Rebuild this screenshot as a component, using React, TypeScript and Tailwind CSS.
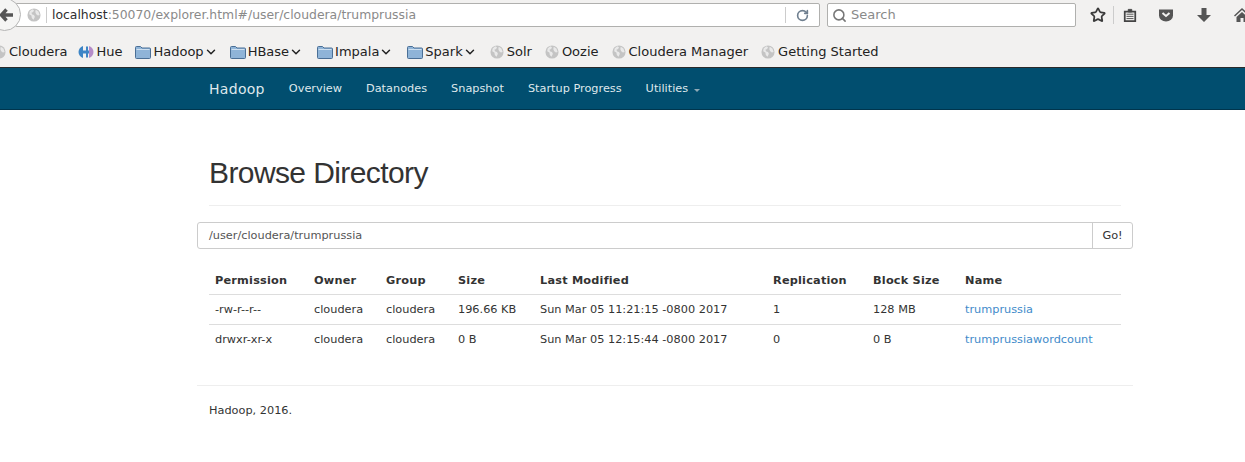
import { ChevronDown, RotateCw, Search, Star } from "lucide-react";

const dejavu = "font-['DejaVu_Sans',sans-serif]";

function Globe({ className = "" }: { className?: string }) {
  return (
    <svg viewBox="0 0 16 16" className={`w-[14px] h-[14px] shrink-0 ${className}`}>
      <circle cx="8" cy="8" r="7.5" fill="#c4c4c4" />
      <path d="M3 4l3-2.5 2 1-1 2-2 1 1 2 2 .5 1 2-1.500 3.500-2-2-.5-3-2.500-1.500z" fill="#e9e9e9" />
      <path d="M10 2l3 2 1.500 4-2 .5-2-1.500-1-2.500z" fill="#e9e9e9" />
    </svg>
  );
}

function Folder() {
  return (
    <svg viewBox="0 0 16 14" className="w-[16px] h-[14px] shrink-0">
      <path d="M.5 2.500a1 1 0 011-1h4l1.500 1.500h7.500a1 1 0 011 1v8.500a1 1 0 01-1 1h-13a1 1 0 01-1-1z" fill="#8fb4d8" stroke="#4a6f96" />
      <path d="M1.500 4.500h13" stroke="#cfe0f0" />
    </svg>
  );
}

function HueIcon() {
  return (
    <svg viewBox="0 0 16 14" className="w-[16px] h-[14px] shrink-0">
      <path d="M5 1C2 2 .5 4.500.5 7S2 12 5 13z" fill="#3d85c6" />
      <rect x="5" y="5.500" width="6" height="3" fill="#3d85c6" />
      <path d="M8 1.500h2v11H8z" fill="#3d85c6" />
      <path d="M11 1c3 1 4.500 3.500 4.500 6S14 12 11 13z" fill="#b48cc8" />
    </svg>
  );
}

function Bookmark({
  icon,
  label,
  menu,
  className = "",
}: {
  icon: "globe" | "folder" | "hue";
  label: string;
  menu?: boolean;
  className?: string;
}) {
  return (
    <div className={`flex items-center shrink-0 ${icon === "globe" ? "gap-[3px]" : "gap-[2px]"} ${className}`}>
      {icon === "globe" && <Globe />}
      {icon === "folder" && <Folder />}
      {icon === "hue" && <HueIcon />}
      <span>{label}</span>
      {menu && <ChevronDown className="w-[14px] h-[14px] -ml-[2px] text-[#222]" strokeWidth={2.5} />}
    </div>
  );
}

function BrowserChrome() {
  return (
    <div className={`relative h-[68px] bg-[#f2f1f0] ${dejavu} border-b border-[#2a2a2a] overflow-hidden`}>
      {/* Back button */}
      <div className="absolute -left-[12px] -top-[2px] z-10 w-[33px] h-[33px] rounded-full border border-[#b5b5b5] bg-[#f5f5f4] flex items-center justify-end pr-[7px]">
        <svg viewBox="0 0 14 14" className="w-[14px] h-[14px]">
          <path d="M7.500 1.500L2.500 7l5 5.500M3 7H14" fill="none" stroke="#555" strokeWidth="3.400" />
        </svg>
      </div>

      <div className="flex h-[30px] pt-[3px] items-start">
        {/* URL bar */}
        <div className="ml-[15px] w-[805px] h-[24px] shrink-0 bg-white border border-[#b0b0ae] rounded-[2px] flex items-center text-[12.4px]">
          <Globe className="ml-[11px]" />
          <div className="ml-[5px] w-px h-[16px] bg-[#ccc]" />
          <span className="ml-[5px] text-[#2e2e2e]">localhost</span>
          <span className="text-[#8a8a8a]">:50070/explorer.html#/user/cloudera/trumprussia</span>
          <div className="ml-auto w-px h-[16px] bg-[#ccc]" />
          <RotateCw className="mx-[10px] w-[13px] h-[13px] text-[#6f7f8f]" strokeWidth={3} />
        </div>
        {/* Search */}
        <div className="ml-[7px] w-[249px] h-[24px] shrink-0 bg-white border border-[#b0b0ae] rounded-[2px] flex items-center text-[13px] text-[#8a8a8a]">
          <Search className="ml-[4px] w-[15px] h-[15px] text-[#777]" strokeWidth={2.500} />
          <span className="ml-[4px]">Search</span>
        </div>
        {/* Toolbar icons */}
        <div className="ml-[14px] flex items-center h-[24px] shrink-0 text-[#4a4a4a]">
          <Star className="w-[16px] h-[16px] text-[#3a3a3a]" strokeWidth={2.6} />
          <div className="ml-[7px] w-px h-[18px] bg-[#ccc]" />
          <svg viewBox="0 0 16 16" className="ml-[9px] w-[14px] h-[15px]">
            <path d="M2 3.500h12v11H2z" fill="none" stroke="#444" strokeWidth="2" />
            <path d="M6 1h4v3H6zM4 6.500h8M4 9h8M4 11.500h8" fill="#444" stroke="#444" />
          </svg>
          <svg viewBox="0 0 16 16" className="ml-[21px] w-[16px] h-[16px]">
            <path d="M1 2.500h14v6a7 6 0 01-14 0z" fill="#555" />
            <path d="M4.500 6L8 9l3.500-3" fill="none" stroke="#f2f1f0" strokeWidth="2" />
          </svg>
          <svg viewBox="0 0 14 14" className="ml-[23px] w-[14px] h-[14px]">
            <path d="M4.500 0h5v7H14l-7 7-7-7h4.500z" fill="#555" />
          </svg>
          <svg viewBox="0 0 16 16" className="ml-[23px] w-[16px] h-[16px] shrink-0">
            <path d="M8 1L0 8.500l1 1L8 3l7 6.500 1-1zM2.500 10v5h4v-4h3v4h4v-5L8 5z" fill="#555" />
          </svg>
        </div>
      </div>

      {/* Bookmarks */}
      <div className="flex items-center h-[22px] mt-[11px] -ml-[8px] text-[13px] text-[#222] gap-[12px]">
        <Bookmark icon="globe" label="Cloudera" />
        <Bookmark icon="hue" label="Hue" className="-ml-[1px]" />
        <Bookmark icon="folder" label="Hadoop" menu className="ml-[1px]" />
        <Bookmark icon="folder" label="HBase" menu />
        <Bookmark icon="folder" label="Impala" menu className="ml-[2px]" />
        <Bookmark icon="folder" label="Spark" menu className="ml-[2px]" />
        <Bookmark icon="globe" label="Solr" className="ml-[1px]" />
        <Bookmark icon="globe" label="Oozie" className="ml-[1px]" />
        <Bookmark icon="globe" label="Cloudera Manager" className="ml-[1px]" />
        <Bookmark icon="globe" label="Getting Started" className="ml-[1px]" />
      </div>
    </div>
  );
}

function Navbar() {
  const links = ["Overview", "Datanodes", "Snapshot", "Startup Progress"];
  return (
    <div className={`h-[42px] bg-[#014e6f] border-b border-[#00354d] flex items-center pl-[209px] pt-[2px] ${dejavu} text-[#dfe8ec]`}>
      <span className="text-[14px] tracking-[0.3px] mr-[24px]">Hadoop</span>
      <div className="flex items-center gap-[24px] text-[11.3px]">
        {links.map((l) => (
          <span key={l}>{l}</span>
        ))}
        <span className="flex items-center">
          Utilities
          <span className="ml-[6px] mt-[2px] border-x-[3px] border-t-[3px] border-x-transparent border-t-[#8fa9b6]" />
        </span>
      </div>
    </div>
  );
}

const rows = [
  ["-rw-r--r--", "cloudera", "cloudera", "196.66 KB", "Sun Mar 05 11:21:15 -0800 2017", "1", "128 MB", "trumprussia"],
  ["drwxr-xr-x", "cloudera", "cloudera", "0 B", "Sun Mar 05 12:15:44 -0800 2017", "0", "0 B", "trumprussiawordcount"],
];

const headers = ["Permission", "Owner", "Group", "Size", "Last Modified", "Replication", "Block Size", "Name"];
const widths = ["w-[99px]", "w-[72px]", "w-[72px]", "w-[82px]", "w-[233px]", "w-[100px]", "w-[92px]", "w-[162px]"];

export default function App() {
  return (
    <div className="w-[1245px] h-[462px] bg-white overflow-hidden">
      <BrowserChrome />
      <Navbar />

      <div className={`ml-[197px] w-[936px] ${dejavu} text-[11.3px] text-[#333]`}>
        <div className="mx-[12px] mt-[46px] pb-[16px] border-b border-[#eee]">
          <h1 className="font-['Liberation_Sans',sans-serif] text-[30px] leading-[33px] tracking-[-0.6px] text-[#333]">Browse Directory</h1>
        </div>

        {/* Path input */}
        <div className="mt-[16px] flex h-[27px] border border-[#ccc] rounded-[3px]">
          <div className="flex-1 flex items-center pl-[11px] pt-[1px] text-[#555]">/user/cloudera/trumprussia</div>
          <div className="w-[40px] border-l border-[#ccc] pt-[1px] flex items-center justify-center">Go!</div>
        </div>

        {/* Listing */}
        <table className="mx-[12px] mt-[17px] w-[912px] table-fixed border-collapse">
          <thead>
            <tr className="h-[28px] border-b border-[#ddd]">
              {headers.map((h, i) => (
                <th key={h} className={`${widths[i]} px-[6px] pt-[3px] text-left font-bold tracking-[0.2px]`}>
                  {h}
                </th>
              ))}
            </tr>
          </thead>
          <tbody>
            {rows.map((row) => (
              <tr key={row[7]} className="h-[30px] border-b border-[#ddd] last:border-b-0">
                {row.map((cell, i) => (
                  <td key={i} className={`px-[6px] pt-[3px] whitespace-nowrap ${i === 7 ? "text-[#428bca]" : ""}`}>
                    {cell}
                  </td>
                ))}
              </tr>
            ))}
          </tbody>
        </table>

        {/* Footer */}
        <div className="mt-[31px] border-t border-[#eee] pt-[17px] px-[12px]">Hadoop, 2016.</div>
      </div>
    </div>
  );
}
